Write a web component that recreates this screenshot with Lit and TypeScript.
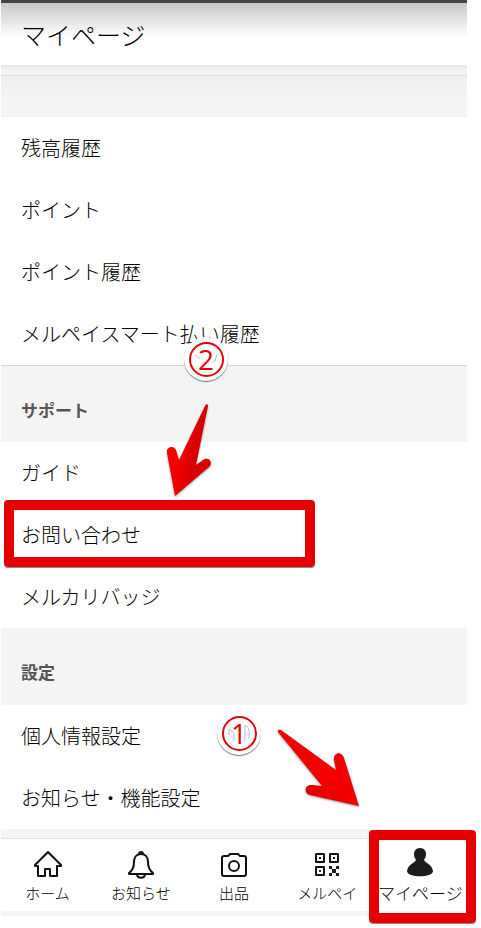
import { LitElement, html, svg, css, nothing } from "lit";
import { customElement } from "lit/decorators.js";
import { classMap } from "lit/directives/class-map.js";

const icons = {
  home: svg`<path d="M14 1 1 14v1h3v10h7v-7h5v7h7V15h4v-1Z" />`,
  bell: svg`<path d="M14 3c-5 0-7 4-7 8 0 5-1 8-5 11v1h24v-1c-4-3-5-6-5-11 0-4-2-8-7-8Z" />
    <path class="solid" d="M11 3a3 3 0 0 1 6 0Z" />
    <path d="M10 23c0 5 8 5 8 0" />`,
  camera: svg`<path d="M4 5h4l2-2h8l2 2h4q2 0 2 2v16q0 2-2 2H4q-2 0-2-2V7q0-2 2-2Z" />
    <circle cx="14" cy="15" r="5" />`,
  qr: svg`<path d="M3 3h8v8H3ZM17 3h8v8h-8ZM3 16h8v8H3Z" />
    <path class="solid" d="M6 6h2v2H6ZM20 6h2v2h-2ZM6 19h2v2H6ZM16 15h3v3h-3ZM23 15h3v3h-3ZM19 18h4v4h-4ZM16 22h3v3h-3ZM23 22h3v3h-3Z" />`,
  person: svg`<path class="solid" d="M14-3c-4 0-6 3-6 6 0 3 1 4 2 6-1 3-8 4-9 11 0 7 26 7 26 0-1-7-8-8-9-11 1-2 2-3 2-6 0-3-2-6-6-6Z" />`,
};

const tabs = [
  { label: "ホーム", icon: icons.home },
  { label: "お知らせ", icon: icons.bell },
  { label: "出品", icon: icons.camera },
  { label: "メルペイ", icon: icons.qr },
  { label: "マイページ", icon: icons.person, current: true },
];

@customElement("step-badge")
export class StepBadge extends LitElement {
  static properties = { step: { type: Number } };
  declare step: number;

  static styles = css`
    :host {
      display: grid;
      place-items: center;
      box-sizing: border-box;
      width: 44px;
      height: 44px;
      border-radius: 50%;
      background: #fff;
      box-shadow: 0 1px 1px #777;
      color: #e60000;
      font: 28px/34px "Open Sans", "Noto Sans", sans-serif;
    }
    .ring,
    .ghost,
    .digit {
      grid-area: 1 / 1;
    }
    .ring {
      box-sizing: border-box;
      width: 35px;
      height: 35px;
      border: 2px solid #e60000;
      border-radius: 50%;
    }
    .ghost {
      width: 24px;
      height: 20px;
      fill: none;
      stroke: #bbb;
    }
  `;

  render() {
    return html`
      <span class="ring"></span>
      <svg class="ghost" viewBox="0 0 24 20" aria-hidden="true">
        ${this.step === 1
          ? svg`<path d="M2 12V6l5 4v8M18 2v16M18 2q4 2 4 6v7" />`
          : svg`<path d="M1 6l5 4M23 5l-2 7-2 1" />`}
      </svg>
      <span class="digit">${this.step}</span>
    `;
  }
}

@customElement("app-root")
export class AppRoot extends LitElement {
  static styles = css`
    :host {
      display: block;
      min-height: 100vh;
      background: #fff;
      color: #000;
      font: 300 20px/30px "Noto Sans CJK JP", sans-serif;
    }
    .screen {
      margin: 0 14px 0 1px;
    }
    a {
      color: inherit;
      text-decoration: none;
    }
    h1,
    h2,
    ul {
      margin: 0;
      padding: 0;
      list-style: none;
    }
    .header {
      display: flex;
      align-items: center;
      height: 62px;
      padding-left: 20px;
      border-top: 3px solid #444;
      background: linear-gradient(#c8c8c8, #fff 34px);
    }
    h1 {
      font-size: 25px;
      font-weight: 300;
      line-height: 36px;
    }
    .gap {
      height: 10px;
      border-bottom: 1px solid #ddd;
      background: linear-gradient(#e4e4e4, #f2f2f2 5px);
    }
    .spacer {
      height: 40px;
      border-bottom: 1px solid #eee;
      background: linear-gradient(#ededed, #f4f4f4 20px);
    }
    .section {
      position: relative;
    }
    h2 {
      box-sizing: border-box;
      height: 77px;
      padding: 31px 20px 0;
      background: #f4f4f4;
      color: #555;
      font-size: 17px;
      font-weight: 700;
      line-height: 26px;
    }
    .ruled {
      border-top: 1px solid #d4d4d4;
    }
    .row {
      position: relative;
    }
    .row a {
      display: block;
      padding: 16px 20px;
    }
    .frame {
      position: absolute;
      box-sizing: border-box;
      border: 10px solid #e60000;
      border-radius: 4px;
      box-shadow: 0 1px 0 #888;
      pointer-events: none;
    }
    .row .frame {
      inset: -4px auto -1px 3px;
      width: 311px;
    }
    .tab .frame {
      inset: -8px -9px -12px -5px;
    }
    .mark {
      position: absolute;
    }
    .badge-two {
      top: -28px;
      left: 183px;
    }
    .arrow-two {
      top: 37px;
      left: 163px;
    }
    .badge-one {
      top: 83px;
      left: 216px;
    }
    .arrow-one {
      top: 98px;
      left: 272px;
    }
    .arrow {
      overflow: visible;
      filter: drop-shadow(0 1px 1px #999);
      pointer-events: none;
    }
    .tabs {
      display: grid;
      grid-template-columns: repeat(5, 1fr);
      border-top: 9px solid #f4f4f4;
      border-bottom: 5px solid #f4f4f4;
      box-shadow: inset 0 1px 0 #e2e2e2;
    }
    .tab {
      position: relative;
    }
    .tab a {
      display: flex;
      flex-direction: column;
      align-items: center;
      padding: 13px 0 4px;
      font-size: 15px;
      line-height: 28px;
      white-space: nowrap;
    }
    .tab.current a {
      font-size: 17px;
    }
    .icon {
      width: 28px;
      height: 28px;
      overflow: visible;
      fill: none;
      stroke: #111;
      stroke-width: 2;
      stroke-linejoin: round;
    }
    .solid {
      fill: #1c1c1c;
      stroke: none;
    }
  `;

  private row(label: string, framed = false) {
    return html`<li class="row">
      <a href="#">${label}</a>${framed ? html`<span class="frame"></span>` : nothing}
    </li>`;
  }

  render() {
    return html`
      <div class="screen">
        <header class="header"><h1>マイページ</h1></header>
        <div class="gap"></div>
        <main>
          <div class="spacer"></div>
          <ul>
            ${["残高履歴", "ポイント", "ポイント履歴", "メルペイスマート払い履歴"].map((t) => this.row(t))}
          </ul>
          <section class="section">
            <h2 class="ruled">サポート</h2>
            <ul>
              ${this.row("ガイド")} ${this.row("お問い合わせ", true)} ${this.row("メルカリバッジ")}
            </ul>
            <step-badge class="mark badge-two" .step=${2}></step-badge>
            <svg class="mark arrow arrow-two" width="50" height="96" viewBox="0 0 50 96" aria-hidden="true">
              <defs>
                <linearGradient id="red-two" x1="0" y1="0" x2="1" y2="0.3">
                  <stop offset="0.4" stop-color="#f50000" />
                  <stop offset="0.7" stop-color="#d90000" />
                </linearGradient>
              </defs>
              <path
                fill="url(#red-two)"
                d="M41 4q2-4 3 0L32 63l7-5c5-4 11 2 6 7L11 94 3 51c-1-7 7-8 9-3l3 10Z"
              />
            </svg>
          </section>
          <section class="section">
            <h2>設定</h2>
            <ul>
              ${this.row("個人情報設定")} ${this.row("お知らせ・機能設定")}
            </ul>
            <step-badge class="mark badge-one" .step=${1}></step-badge>
            <svg class="mark arrow arrow-one" width="90" height="84" viewBox="0 0 90 84" aria-hidden="true">
              <defs>
                <linearGradient id="red-one" x1="0.3" y1="1" x2="0.8" y2="0.4">
                  <stop offset="0.2" stop-color="#d90000" />
                  <stop offset="0.6" stop-color="#f50000" />
                </linearGradient>
              </defs>
              <path
                fill="url(#red-one)"
                d="M5 6Q4 3 8 4l55 40-2-10c-1-7 7-10 10-2l15 48-49-11c-7-2-5-11 2-10l10 1Z"
              />
            </svg>
          </section>
        </main>
        <nav>
          <ul class="tabs">
            ${tabs.map(
              (t) => html`<li class=${classMap({ tab: true, current: !!t.current })}>
                <a href="#" aria-current=${t.current ? "page" : nothing}>
                  <svg class="icon" viewBox="0 0 28 28" aria-hidden="true">${t.icon}</svg>
                  <span>${t.label}</span>
                </a>
                ${t.current ? html`<span class="frame"></span>` : nothing}
              </li>`,
            )}
          </ul>
        </nav>
      </div>
    `;
  }
}
